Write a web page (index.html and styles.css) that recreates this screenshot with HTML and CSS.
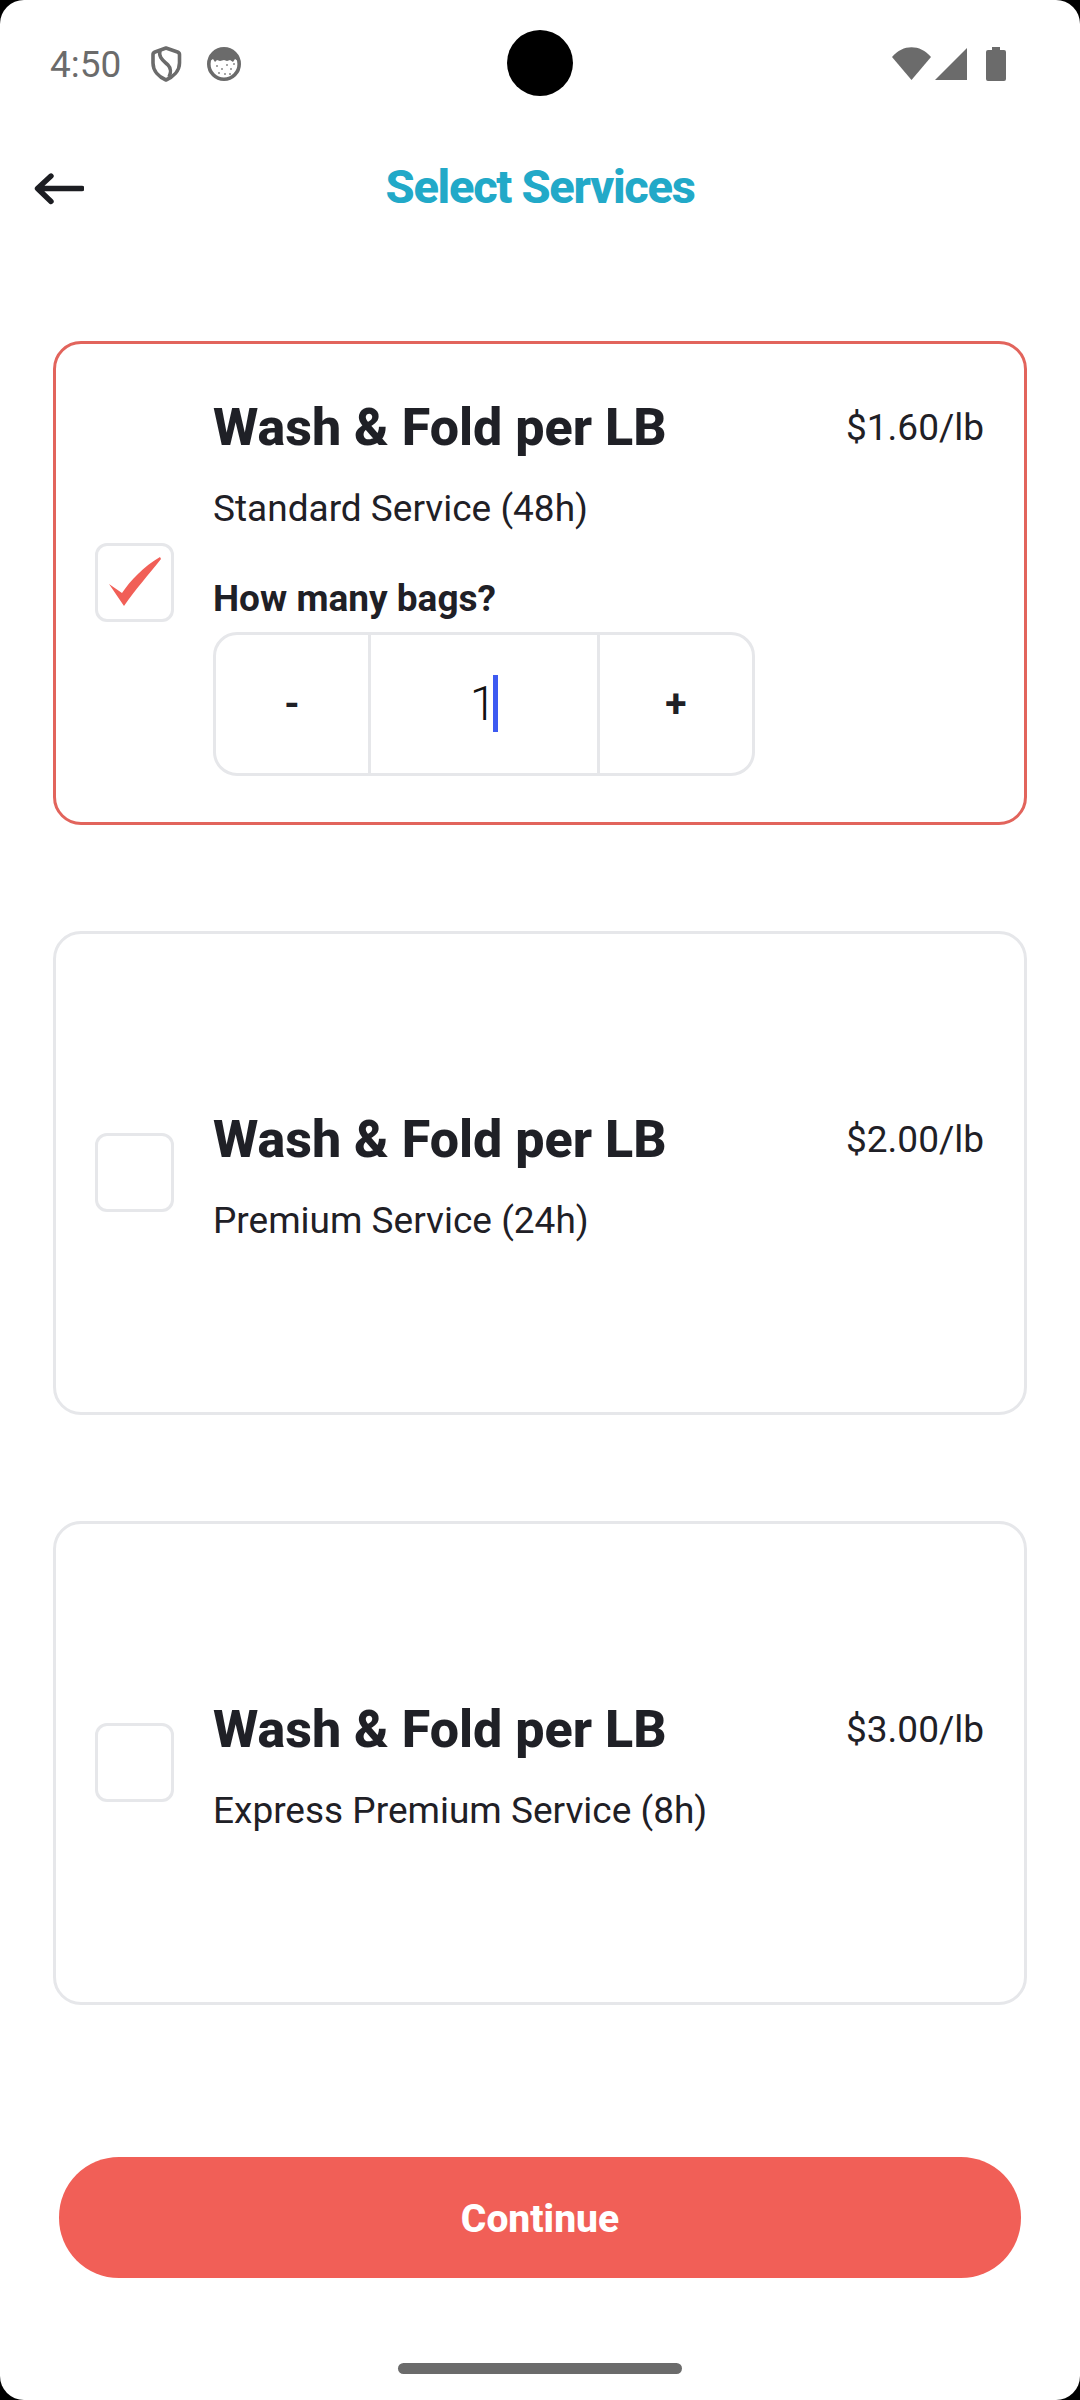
FILE: index.html
```html
<!DOCTYPE html>
<html lang="en">
<head>
<meta charset="utf-8">
<title>Select Services</title>
<link rel="stylesheet" href="styles.css">
</head>
<body>
<div class="screen">
  <div class="camera"></div>
  <div class="status">
    <div class="status-left">
      <span class="time">4:50</span>
      <svg class="ic-shield" viewBox="0 0 32 36"><path d="M16 2 L27.5 6 Q29.5 6.8 29.5 8.5 V17 C29.5 25 23 31 16 34 C9 31 3 25 3 17 V8.5 Q3 6.8 5 6 Z" fill="none" stroke="#6b6b6b" stroke-width="3.6" stroke-linejoin="round"/><path d="M10 4 C8 12 14 15 18 19 C21 22 21 27 19 31" fill="none" stroke="#6b6b6b" stroke-width="3.6"/></svg>
      <svg class="ic-face" viewBox="0 0 34 34"><circle cx="17" cy="17" r="15.2" fill="#fff" stroke="#6b6b6b" stroke-width="3.6"/><path d="M3 14 C5 6 10 2 17 2 C24 2 29 6 31 14 L28 12 L26 15 L23 13 L20 14 L17 13 L13 14 L10 13 L8 15 L6 12 Z" fill="#6b6b6b"/><g fill="#8a8a8a"><circle cx="10" cy="19" r="1"/><circle cx="15" cy="22" r="1"/><circle cx="20" cy="18" r="1"/><circle cx="24" cy="22" r="1"/><circle cx="12" cy="26" r="1"/><circle cx="18" cy="27" r="1"/><circle cx="23" cy="27" r="1"/><circle cx="27" cy="17" r="1"/></g></svg>
    </div>
    <div class="status-right">
      <svg class="ic-wifi" viewBox="0 0 39 33"><path d="M0 10 C11 -3 28 -3 39 10 L19.5 33 Z" fill="#6b6b6b"/></svg>
      <svg class="ic-signal" viewBox="0 0 32 32"><path d="M32 0 V32 H0 Z" fill="#6b6b6b"/></svg>
      <svg class="ic-battery" viewBox="0 0 20 34"><path d="M6 0 H14 V3 H18 Q20 3 20 5 V32 Q20 34 18 34 H2 Q0 34 0 32 V5 Q0 3 2 3 H6 Z" fill="#6b6b6b"/></svg>
    </div>
  </div>

  <header class="topbar">
    <svg class="ic-back" viewBox="0 0 50 32"><path d="M48 15.5 H4 M17 3 L3.5 15.5 L17 28.5" fill="none" stroke="#1c1d22" stroke-width="5.4" stroke-linecap="round" stroke-linejoin="round"/></svg>
    <h1 class="page-title">Select Services</h1>
  </header>

  <main class="cards">
    <section class="card card-selected">
      <div class="checkbox">
        <svg class="ic-check" viewBox="0 0 52 50"><path d="M0 27 L13 36 C21 24 35 9 51 0 L52 2 C40 17 26 33 15 49 Z" fill="#f15f57"/></svg>
      </div>
      <div class="card-body">
        <div class="title-row">
          <h2 class="card-title">Wash &amp; Fold per LB</h2>
          <span class="price">$1.60/lb</span>
        </div>
        <p class="service">Standard Service (48h)</p>
        <p class="qty-label">How many bags?</p>
        <div class="stepper">
          <div class="step-btn step-minus">-</div>
          <div class="step-value"><span class="value">1</span><span class="caret"></span></div>
          <div class="step-btn step-plus">+</div>
        </div>
      </div>
    </section>

    <section class="card">
      <div class="checkbox"></div>
      <div class="card-body">
        <div class="title-row">
          <h2 class="card-title">Wash &amp; Fold per LB</h2>
          <span class="price">$2.00/lb</span>
        </div>
        <p class="service">Premium Service (24h)</p>
      </div>
    </section>

    <section class="card">
      <div class="checkbox"></div>
      <div class="card-body">
        <div class="title-row">
          <h2 class="card-title">Wash &amp; Fold per LB</h2>
          <span class="price">$3.00/lb</span>
        </div>
        <p class="service">Express Premium Service (8h)</p>
      </div>
    </section>
  </main>

  <div class="footer">
    <button class="continue">Continue</button>
    <div class="home-bar"></div>
  </div>
</div>
</body>
</html>
```

FILE: styles.css
```css
* { box-sizing: border-box; }
html, body { margin: 0; padding: 0; background: #000; }
body { width: 1080px; height: 2400px; font-family: Roboto, "Noto Sans", sans-serif; color: #1f2026; }
.screen { position: relative; width: 1080px; height: 2400px; background: #fff; border-radius: 24px; overflow: hidden; display: flex; flex-direction: column; }
.camera { position: absolute; left: 507px; top: 30px; width: 66px; height: 66px; border-radius: 50%; background: #000; }

.status { height: 126px; padding: 47px 74px 0 50px; display: flex; justify-content: space-between; align-items: flex-start; }
.status-left { display: flex; align-items: center; height: 34px; }
.time { font-size: 37px; line-height: 36px; color: #6b6b6b; width: 100px; padding-top: 2px; }
.ic-shield { width: 32px; height: 36px; display: block; }
.ic-face { width: 34px; height: 34px; display: block; margin-left: 25px; }
.status-right { display: flex; align-items: flex-start; }
.ic-wifi { width: 39px; height: 33px; display: block; }
.ic-signal { width: 32px; height: 32px; display: block; margin: 1px 0 0 4px; }
.ic-battery { width: 20px; height: 34px; display: block; margin-left: 19px; }

.topbar { position: relative; height: 122px; display: flex; justify-content: center; align-items: center; }
.ic-back { position: absolute; left: 34px; top: 47px; width: 50px; height: 32px; }
.page-title { margin: 0; font-size: 47px; line-height: 60px; font-weight: 800; color: #22a9c8; letter-spacing: -1.3px; }

.cards { padding: 93px 53px 0; display: flex; flex-direction: column; gap: 106px; }
.card { height: 484px; border: 3px solid #e6e7ea; border-radius: 28px; padding: 0 40px 0 39px; display: flex; align-items: center; gap: 39px; }
.card-selected { border-color: #e2645c; }
.checkbox { flex: none; width: 79px; height: 79px; margin-bottom: 2px; border: 3px solid #e6e7ea; border-radius: 12px; display: flex; align-items: center; justify-content: center; }
.ic-check { width: 52px; height: 50px; display: block; }
.card-body { flex: 1; min-width: 0; }
.title-row { display: flex; justify-content: space-between; align-items: center; height: 74px; }
.card-title { margin: 0; font-size: 52px; line-height: 74px; font-weight: 800; }
.price { font-size: 37px; line-height: 74px; }
.service { margin: 24px 0 3px; font-size: 37px; line-height: 40px; }
.qty-label { margin: 50px 0 13px; font-size: 37px; line-height: 40px; font-weight: 700; }

.stepper { width: 542px; height: 144px; border: 3px solid #e6e7ea; border-radius: 24px; display: flex; }
.step-btn { flex: none; width: 152px; display: flex; align-items: center; justify-content: center; font-size: 39px; font-weight: 700; }
.step-value { flex: 1; border-left: 3px solid #e6e7ea; border-right: 3px solid #e6e7ea; display: flex; align-items: center; justify-content: center; }
.value { font-size: 48px; font-weight: 300; color: #111; margin-right: -3px; }
.caret { width: 5px; height: 57px; background: #3d5af1; }

.footer { flex: 1; position: relative; }
.continue { position: absolute; left: 59px; top: 152px; width: 962px; height: 121px; padding: 2px 0 0; border: 0; border-radius: 60px; background: #f15f57; color: #fff; font-family: Roboto, sans-serif; font-size: 39px; font-weight: 800; }
.home-bar { position: absolute; left: 398px; bottom: 26px; width: 284px; height: 11px; border-radius: 6px; background: #6b6b6b; }
```
